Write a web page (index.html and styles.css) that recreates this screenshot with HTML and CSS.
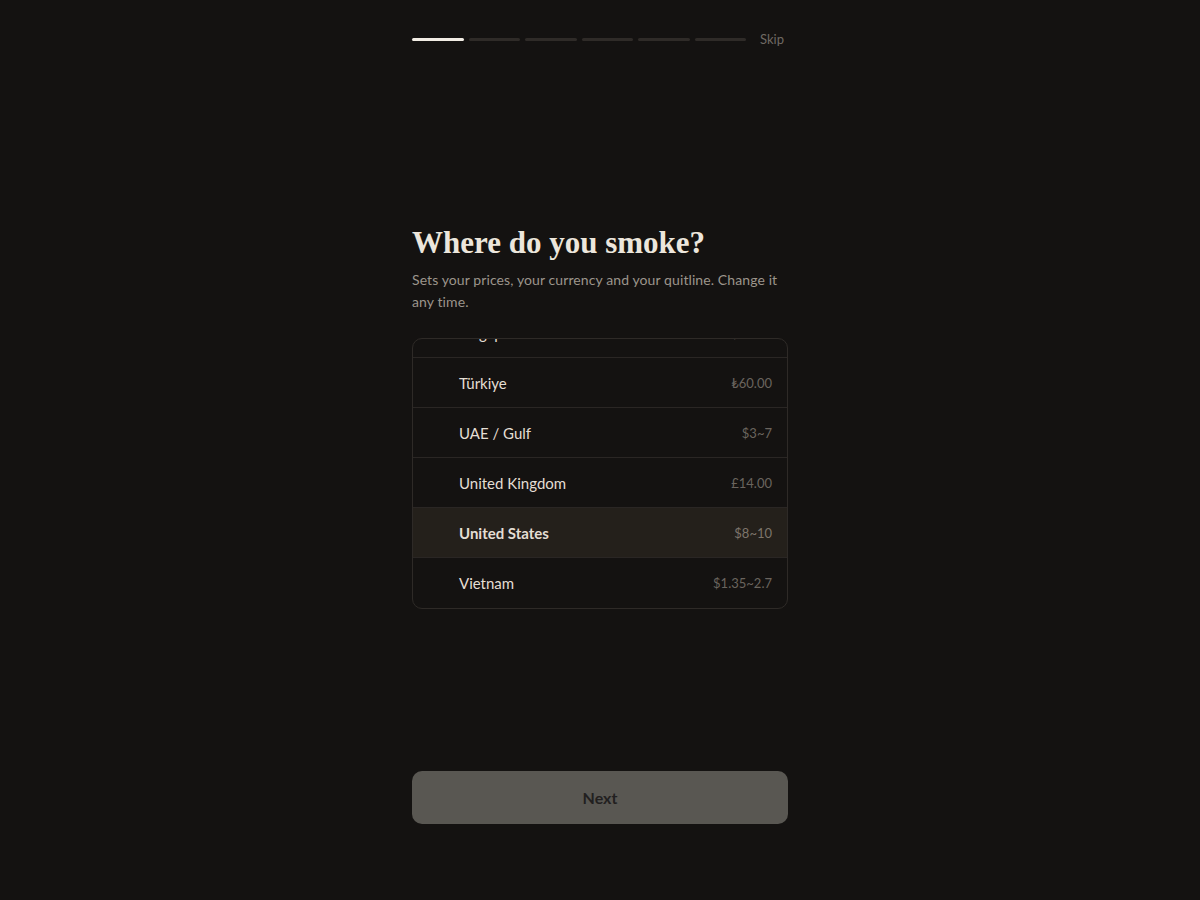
FILE: index.html
```html
<!DOCTYPE html>
<html lang="en">
<head>
    <meta charset="UTF-8">
    <meta name="viewport" content="width=device-width, initial-scale=1.0">
    <title>Where do you smoke?</title>
    <link rel="stylesheet" href="styles.css">
</head>
<body>
    <main class="onboard">
        <div class="progress">
            <div class="steps">
                <span class="step active"></span>
                <span class="step"></span>
                <span class="step"></span>
                <span class="step"></span>
                <span class="step"></span>
                <span class="step"></span>
            </div>
            <a class="skip" href="#">Skip</a>
        </div>

        <section class="content">
            <h1>Where do you smoke?</h1>
            <p class="lead">Sets your prices, your currency and your quitline. Change it any time.</p>

            <ul class="regions" id="regions">
                <li class="region"><span class="name">Singapore</span><span class="price">S$14.00</span></li>
                <li class="region"><span class="name">Türkiye</span><span class="price">₺60.00</span></li>
                <li class="region"><span class="name">UAE / Gulf</span><span class="price">$3~7</span></li>
                <li class="region"><span class="name">United Kingdom</span><span class="price">£14.00</span></li>
                <li class="region selected"><span class="name">United States</span><span class="price">$8~10</span></li>
                <li class="region"><span class="name">Vietnam</span><span class="price">$1.35~2.7</span></li>
            </ul>
        </section>

        <button class="next" type="button" disabled>Next</button>
    </main>

    <script>
        const list = document.getElementById('regions');
        list.scrollTop = list.scrollHeight;
    </script>
</body>
</html>
```

FILE: styles.css
```css
body { margin: 0; background: #141211; color: #ebe5db; font-family: Lato, "Noto Sans", sans-serif; }
.onboard { width: 376px; margin: 0 auto; height: 900px; display: flex; flex-direction: column; }

.progress { display: flex; align-items: center; gap: 14px; padding-top: 30px; height: 18px; }
.steps { flex: 1; display: flex; gap: 5px; }
.step { flex: 1; height: 3px; border-radius: 2px; background: #2f2b28; }
.step.active { background: #f1ece4; }
.skip { color: #6f6963; font-size: 13px; text-decoration: none; padding-right: 4px; }

.content { margin-top: 176px; }
h1 { margin: 0; font-family: "Liberation Serif", serif; font-weight: 700; font-size: 31px; color: #ece6dc; line-height: 38px; }
.lead { margin: 7px 0 25px; font-size: 14px; letter-spacing: 0.1px; line-height: 22px; color: #9c958c; }

.regions { list-style: none; margin: 0; padding: 0; height: 269px; overflow-y: auto; scrollbar-width: none; border: 1px solid #2e2a27; border-radius: 10px; }
.region { display: flex; justify-content: space-between; align-items: center; height: 49px; padding: 0 15px 0 46px; border-bottom: 1px solid #2a2624; font-size: 15px; color: #e4ded4; }
.region:last-child { border-bottom: none; height: 50px; }
.region .price { font-size: 13px; color: #6a645e; }
.region.selected { background: #24201b; }
.region.selected .name { font-weight: 700; }
.region.selected .price { color: #7d756b; }

.next { margin-top: auto; margin-bottom: 76px; height: 53px; border: none; border-radius: 10px; background: #595752; color: #222020; font-family: inherit; font-size: 16px; font-weight: 700; }
```
